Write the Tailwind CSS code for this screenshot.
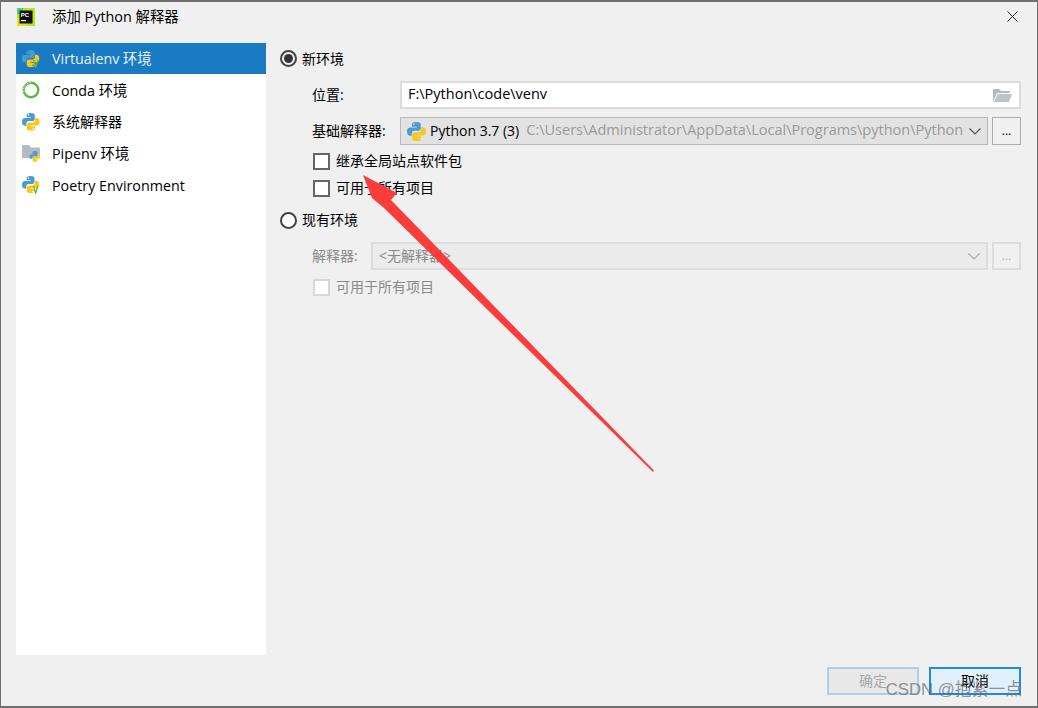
<!DOCTYPE html>
<html lang="en">
<head>
  <meta charset="UTF-8">
  <title>添加 Python 解释器</title>
  <script src="https://cdn.jsdelivr.net/npm/@tailwindcss/browser@4"></script>
</head>
<body class="w-[1038px] h-[708px] overflow-hidden bg-[#f0f0f0] font-['Open_Sans','Noto_Sans_CJK_SC',sans-serif] text-[14px] text-black">
  <svg width="0" height="0" class="absolute">
    <defs>
      <g id="py">
        <path fill="#4a9bd4" d="M7.900 0C5.600 0 4.200 .7 4.200 2v1.900h4v.7H2.600C1 4.600 0 5.800 0 8c0 2.300 1 3.500 2.500 3.500H4V9.600c0-1.300 1-2.300 2.300-2.300h3.400c1 0 1.900-.9 1.900-1.900V2c0-1.300-1.600-2-3.700-2zM5.800 1.200a.7.7 0 1 1 0 1.400.7.7 0 0 1 0-1.400z"/>
        <path fill="#f8c81c" d="M8.100 16c2.300 0 3.700-.7 3.700-2v-1.900h-4v-.7h5.600C15 11.400 16 10.200 16 8c0-2.300-1-3.500-2.500-3.500H12v1.900c0 1.300-1 2.300-2.300 2.300H6.300c-1 0-1.900.9-1.900 1.900V14c0 1.300 1.600 2 3.700 2zm2.100-1.200a.7.7 0 1 1 0-1.400.7.7 0 0 1 0 1.400z"/>
      </g>
    </defs>
  </svg>

  <div class="relative w-full h-full border-x border-[#6f6f6f] border-t-2 border-b-2">
    <!-- title bar -->
    <div class="flex items-center h-[31px] pl-[16px] pr-[19px] pb-[2px]">
      <svg width="18" height="18" viewBox="0 0 18 18" class="shrink-0">
        <rect width="18" height="18" fill="#b7e51e"/>
        <rect x="0" y="9" width="9" height="9" fill="#e4e31e"/>
        <rect x="0" y="0" width="6" height="6" fill="#3fd28a"/>
        <rect x="2.500" y="2.500" width="13" height="13" fill="#111"/>
        <text x="3.800" y="9" font-size="6" font-weight="700" fill="#fff" font-family="Liberation Sans">PC</text>
        <rect x="4" y="12" width="5" height="1.200" fill="#fff"/>
      </svg>
      <span class="ml-[17px] pt-[2px] text-[14.400px] leading-none">添加 Python 解释器</span>
      <svg width="11" height="11" viewBox="0 0 11 11" class="ml-auto" stroke="#222" stroke-width="1" fill="none"><path d="M.5.500l10 10M10.500.500l-10 10"/></svg>
    </div>

    <div class="flex pl-[15px] pt-[10px]">
      <!-- interpreter types -->
      <ul class="w-[250px] h-[612px] bg-white shrink-0 text-[14.300px]">
        <li class="flex items-center h-[31px] pl-[6px] gap-[12px] bg-[#1b7bc2] text-[#e6f2fb]">
          <svg width="18" height="18" viewBox="0 0 18 18"><use href="#py" transform="scale(1.080)"/><path d="M11.500 10l2.200 7 2.200-7" fill="none" stroke="#6fb43c" stroke-width="1.300"/></svg>
          <span>Virtualenv 环境</span>
        </li>
        <li class="flex items-center h-[32px] pl-[6px] gap-[12px]">
          <svg width="18" height="18" viewBox="0 0 18 18"><circle cx="9" cy="9" r="7.300" fill="none" stroke="#5fb548" stroke-width="2.400"/><path d="M2 11A7.300 7.300 0 0 1 9 1.700" fill="none" stroke="#fff" stroke-width="1" stroke-dasharray="1.500 1.500"/></svg>
          <span class="pt-[2px]">Conda 环境</span>
        </li>
        <li class="flex items-center h-[31px] pl-[6px] gap-[12px]">
          <svg width="18" height="18" viewBox="0 0 18 18"><use href="#py" transform="scale(1.100)"/></svg>
          <span class="text-[14px]">系统解释器</span>
        </li>
        <li class="flex items-center h-[32px] pl-[6px] gap-[12px]">
          <svg width="18" height="18" viewBox="0 0 18 18"><path d="M0 1h7l2 2.500h9V14H0z" fill="#b3bcc4"/><use href="#py" transform="translate(7.500 7) scale(.68)"/></svg>
          <span class="pt-[2px]">Pipenv 环境</span>
        </li>
        <li class="flex items-center h-[32px] pl-[6px] gap-[12px]">
          <svg width="18" height="18" viewBox="0 0 18 18"><use href="#py" transform="scale(1.080)"/><path d="M11.500 10l2.200 7 2.200-7" fill="none" stroke="#6fb43c" stroke-width="1.300"/></svg>
          <span class="pt-[2px]">Poetry Environment</span>
        </li>
      </ul>

      <!-- form -->
      <div class="flex-1 pl-[14px] pr-[16px]">
        <label class="flex items-center h-[31px] gap-[5px]">
          <span class="w-[17px] h-[17px] rounded-full border-2 border-[#444] flex items-center justify-center"><span class="w-[9px] h-[9px] rounded-full bg-[#333]"></span></span>
          <span>新环境</span>
        </label>

        <div class="pl-[32px] pt-[7px]">
          <div class="flex items-center h-[28px]">
            <span class="w-[88px] pb-[2px]">位置:</span>
            <div class="flex-1 h-full flex items-center bg-white border-2 border-[#dcdcdc] pl-[6px] pr-[7px]">
              <span class="text-[14.500px] pb-[2px]">F:\Python\code\venv</span>
              <svg width="19" height="15" viewBox="0 0 19 15" class="ml-auto"><path d="M0 14V1h6l2 2h9v2H4z" fill="#b3bcc4"/><path d="M4.500 6H19l-3 8H1z" fill="#bcc5cc"/></svg>
            </div>
          </div>

          <div class="flex items-center h-[28px] mt-[8px]">
            <span class="w-[88px] pb-[2px]">基础解释器:</span>
            <div class="w-[588px] h-full flex items-center bg-[#e2e2e2] border border-[#b9b9b9] pl-[6px] pr-[6px] overflow-hidden">
              <svg width="19" height="19" viewBox="0 0 16 16" class="shrink-0"><use href="#py"/></svg>
              <span class="ml-[4px] whitespace-nowrap pb-[2px]">Python 3.7 (3)</span>
              <span class="ml-[7px] flex-1 overflow-hidden whitespace-nowrap text-[14.500px] text-[#9a9a9a] pb-[2px]">C:\Users\Administrator\AppData\Local\Programs\python\Python</span>
              <svg width="12" height="7" viewBox="0 0 12 7" class="ml-[6px] shrink-0" fill="none" stroke="#555" stroke-width="1.200"><path d="M.5.500l5.500 5.500 5.500-5.500"/></svg>
            </div>
            <button class="ml-[4px] w-[29px] h-full bg-[#f0f0f0] border border-[#adadad] text-[12px] leading-none">...</button>
          </div>

          <label class="flex items-center h-[18px] mt-[7px] gap-[6px]">
            <span class="ml-[1px] w-[17px] h-[17px] bg-white border-2 border-[#666]"></span>
            <span class="pb-[2px]">继承全局站点软件包</span>
          </label>
          <label class="flex items-center h-[18px] mt-[9px] gap-[6px]">
            <span class="ml-[1px] w-[17px] h-[17px] bg-white border-2 border-[#666]"></span>
            <span class="pb-[2px]">可用于所有项目</span>
          </label>
        </div>

        <label class="flex items-center h-[18px] mt-[14px] gap-[5px]">
          <span class="w-[17px] h-[17px] rounded-full border-2 border-[#444] bg-white"></span>
          <span class="pb-[2px]">现有环境</span>
        </label>

        <div class="pl-[32px] pt-[13px] text-[#8a8a8a]">
          <div class="flex items-center h-[28px]">
            <span class="w-[59px] pb-[2px]">解释器:</span>
            <div class="w-[617px] h-full flex items-center bg-[#ececec] border-2 border-[#dcdcdc] pl-[6px] pr-[6px]">
              <span class="pb-[2px]">&lt;无解释器&gt;</span>
              <svg width="12" height="7" viewBox="0 0 12 7" class="ml-auto" fill="none" stroke="#a8a8a8" stroke-width="1.200"><path d="M.5.500l5.500 5.500 5.500-5.500"/></svg>
            </div>
            <button class="ml-[4px] w-[29px] h-full border-2 border-[#dcdcdc] text-[12px] leading-none text-[#b0b0b0]">...</button>
          </div>
          <label class="flex items-center h-[18px] mt-[8px] gap-[6px]">
            <span class="ml-[1px] w-[17px] h-[17px] bg-white border-2 border-[#d8d8d8]"></span>
            <span class="pb-[2px]">可用于所有项目</span>
          </label>
        </div>
      </div>
    </div>

    <!-- dialog buttons -->
    <div class="flex justify-end gap-[10px] pr-[16px] mt-[12px]">
      <button class="w-[92px] h-[28px] pb-[2px] bg-[#e8e8e8] border-2 border-[#a9d1ee] text-[#a8a8a8]">确定</button>
      <button class="w-[92px] h-[28px] pb-[2px] bg-[#e1f0fb] border-2 border-[#1f8ae0] text-black">取消</button>
    </div>

    <!-- image annotations on top of the screenshot -->
    <span class="absolute right-[15px] top-[680px] text-[16.800px] leading-none text-[#666]/70 whitespace-nowrap font-['Liberation_Sans','Noto_Sans_CJK_SC',sans-serif]">CSDN @抱紧一点</span>
    <svg class="absolute left-[-1px] top-[-2px] pointer-events-none" width="1038" height="708" viewBox="0 0 1038 708">
      <path d="M363 175L397 193L391 200L654 470.500L653 472L384 208L372 198z" fill="#fa3c3c"/>
    </svg>
  </div>
</body>
</html>
